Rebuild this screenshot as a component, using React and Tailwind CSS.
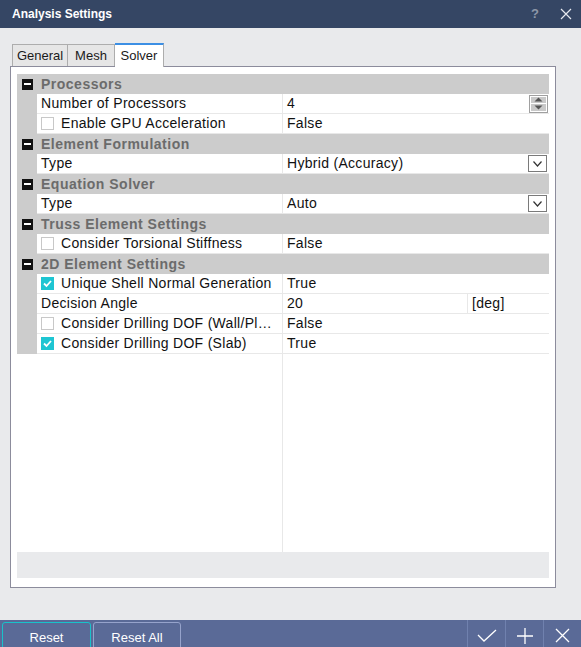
import React from "react";

const rows = [
  { cat: true, label: "Processors" },
  { label: "Number of Processors", value: "4", control: "spin" },
  { label: "Enable GPU Acceleration", value: "False", check: false },
  { cat: true, label: "Element Formulation" },
  { label: "Type", value: "Hybrid (Accuracy)", control: "drop" },
  { cat: true, label: "Equation Solver" },
  { label: "Type", value: "Auto", control: "drop" },
  { cat: true, label: "Truss Element Settings" },
  { label: "Consider Torsional Stiffness", value: "False", check: false },
  { cat: true, label: "2D Element Settings" },
  { label: "Unique Shell Normal Generation", value: "True", check: true },
  { label: "Decision Angle", value: "20", unit: "[deg]" },
  { label: "Consider Drilling DOF (Wall/Pl\u2026", value: "False", check: false },
  { label: "Consider Drilling DOF (Slab)", value: "True", check: true },
];

const CheckBox = ({ checked }) =>
  checked ? (
    <span className="w-[13px] h-[13px] bg-[#1ec5d2] flex items-center justify-center shrink-0">
      <svg width="11" height="11" viewBox="0 0 11 11">
        <path d="M2 5.5 L4.5 8 L9 3" stroke="white" strokeWidth="1.8" fill="none" />
      </svg>
    </span>
  ) : (
    <span className="w-[13px] h-[13px] bg-white border border-[#c8c8c8] shrink-0" />
  );

const Spinner = () => (
  <div className="ml-auto mr-[1px] w-[19px] h-[18px] border border-[#a0a0a0] bg-white p-[1px] flex flex-col gap-[1px]">
    <div className="flex-1 bg-[#c9c9c9] flex items-center justify-center">
      <svg width="9" height="5" viewBox="0 0 9 5">
        <path d="M0.5 4.5 L4.5 0.5 L8.5 4.5 Z" fill="#555" />
      </svg>
    </div>
    <div className="flex-1 bg-[#c9c9c9] flex items-center justify-center">
      <svg width="9" height="5" viewBox="0 0 9 5">
        <path d="M0.5 0.5 L4.5 4.5 L8.5 0.5 Z" fill="#555" />
      </svg>
    </div>
  </div>
);

const Drop = () => (
  <div className="ml-auto mr-[2px] w-[19px] h-[17px] border border-[#7a7a7a] bg-white flex items-center justify-center">
    <svg width="9" height="6" viewBox="0 0 9 6">
      <path d="M0.5 0.5 L4.5 5 L8.5 0.5" stroke="#333" strokeWidth="1.2" fill="none" />
    </svg>
  </div>
);

const App = () => {
  return (
    <div
      className="w-[581px] h-[647px] flex flex-col bg-[#e9eaec] overflow-hidden"
      style={{ fontFamily: '"Liberation Sans", Arial, sans-serif' }}
    >
      {/* Title bar */}
      <div className="h-[28px] bg-[#354664] flex items-center pl-[12px] shrink-0">
        <span className="text-[12px] font-bold text-white">Analysis Settings</span>
        <span className="ml-auto text-[13px] font-bold text-[#8e97a8] mr-[21px]">?</span>
        <svg width="12" height="12" viewBox="0 0 12 12" className="mr-[9px]">
          <path d="M1 1 L11 11 M11 1 L1 11" stroke="#e6e9ef" strokeWidth="1.2" />
        </svg>
      </div>

      {/* Body */}
      <div className="flex-1 flex flex-col pt-[14px] pl-[10px] pb-[32px] pr-[25px]">
        {/* Tabs */}
        <div className="flex items-end h-[24px] pl-[2px] text-[13px] text-[#1a1a1a]">
          <div className="h-[22px] w-[56px] border border-b-0 border-[#adadad] bg-[#e6e6e6] flex items-center justify-center">
            General
          </div>
          <div className="h-[22px] w-[47px] border border-l-0 border-b-0 border-[#adadad] bg-[#e6e6e6] flex items-center justify-center">
            Mesh
          </div>
          <div className="h-[24px] w-[49px] border-t-2 border-t-[#3c8fe4] border-r border-[#adadad] bg-white flex items-center justify-center -mb-[1px] relative z-10">
            Solver
          </div>
        </div>

        {/* Panel */}
        <div className="flex-1 border border-[#8c8c9c] bg-white pt-[7px] px-[6px] pb-[9px] flex flex-col">
          <div className="flex-1 flex flex-col">
            {rows.map((r, i) =>
              r.cat ? (
                <div key={i} className="h-[20px] bg-[#cccccc] flex items-center">
                  <div className="w-[20px] flex items-center justify-center">
                    <span className="w-[11px] h-[11px] bg-[#111] flex items-center justify-center">
                      <span className="w-[7px] h-[2px] bg-white" />
                    </span>
                  </div>
                  <span className="pl-[4px] text-[14px] font-bold text-[#6b6b6b] tracking-[0.5px]">
                    {r.label}
                  </span>
                </div>
              ) : (
                <div key={i} className="h-[20px] flex text-[14px] text-[#111] tracking-[0.3px]">
                  <div className="w-[20px] bg-[#cccccc] shrink-0" />
                  <div className="w-[246px] shrink-0 border-r border-b border-[#e8e8e8] flex items-center pl-[4px] gap-[7px] whitespace-nowrap overflow-hidden">
                    {r.check !== undefined && <CheckBox checked={r.check} />}
                    <span>{r.label}</span>
                  </div>
                  <div className="flex-1 border-b border-[#e8e8e8] flex items-center">
                    {r.unit ? (
                      <>
                        <span className="w-[185px] h-full border-r border-[#e8e8e8] flex items-center pl-[4px]">
                          {r.value}
                        </span>
                        <span className="pl-[4px]">{r.unit}</span>
                      </>
                    ) : (
                      <span className="pl-[4px]">{r.value}</span>
                    )}
                    {r.control === "spin" && <Spinner />}
                    {r.control === "drop" && <Drop />}
                  </div>
                </div>
              )
            )}
            {/* empty space */}
            <div className="flex-1 flex">
              <div className="w-[266px] border-r border-[#e8e8e8]" />
            </div>
          </div>
          <div className="h-[26px] bg-[#e9eaec] shrink-0" />
        </div>
      </div>

      {/* Footer */}
      <div className="h-[27px] bg-[#5a6a97] flex items-start shrink-0 relative">
        <div className="ml-[2px] mt-[2px] w-[89px] h-[30px] border border-[#19c2ca] rounded-t-[3px] text-[13px] text-white flex items-start justify-center pt-[5px]">
          Reset
        </div>
        <div className="ml-[2px] mt-[2px] w-[88px] h-[30px] border border-[#96a3cb] rounded-t-[3px] text-[13px] text-white flex items-start justify-center pt-[5px]">
          Reset All
        </div>
        <div className="ml-auto flex h-full">
          <div className="w-[38px] h-full border-l border-[#7081ae] flex items-center justify-center pt-[4px]">
            <svg width="20" height="14" viewBox="0 0 20 14">
              <path d="M1 6 L7 12 L19 1" stroke="white" strokeWidth="1.3" fill="none" />
            </svg>
          </div>
          <div className="w-[38px] h-full border-l border-[#7081ae] flex items-center justify-center pt-[4px]">
            <svg width="16" height="16" viewBox="0 0 16 16">
              <path d="M8 0 L8 16 M0 8 L16 8" stroke="white" strokeWidth="1.3" />
            </svg>
          </div>
          <div className="w-[38px] h-full border-l border-[#7081ae] flex items-center justify-center pt-[4px]">
            <svg width="15" height="15" viewBox="0 0 15 15">
              <path d="M1 1 L14 14 M14 1 L1 14" stroke="white" strokeWidth="1.3" />
            </svg>
          </div>
        </div>
      </div>
    </div>
  );
};

export default App;
